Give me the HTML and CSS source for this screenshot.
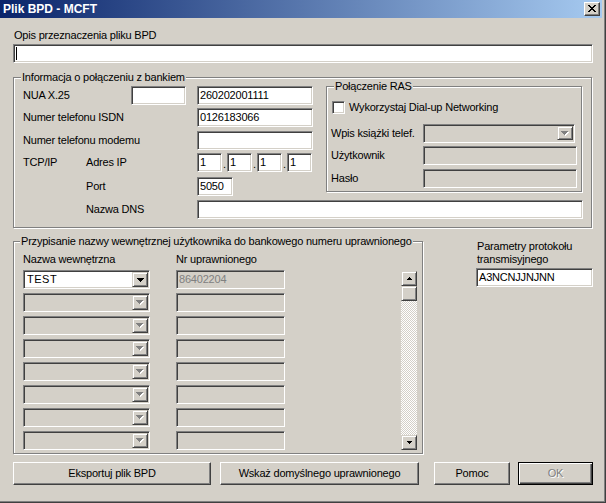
FILE: index.html
```html
<!DOCTYPE html>
<html lang="pl">
<head>
<meta charset="utf-8">
<title>Plik BPD - MCFT</title>
<link rel="stylesheet" href="styles.css">
</head>
<body>
<div class="window">
  <div class="titlebar">
    <span class="title">Plik BPD - MCFT</span>
    <div class="close">
      <svg width="8" height="7" viewBox="0 0 8 7"><path d="M0 0h2v1H0zM6 0h2v1H6zM1 1h2v1H1zM5 1h2v1H5zM2 2h4v1H2zM3 3h2v1H3zM2 4h4v1H2zM1 5h2v1H1zM5 5h2v1H5zM0 6h2v1H0zM6 6h2v1H6z" fill="#000"/></svg>
    </div>
  </div>
  <div class="client">
    <div class="desc-label">Opis przeznaczenia pliku BPD</div>
    <div class="edit desc-edit"><span class="caret"></span></div>

    <div class="group g-conn">
      <div class="gtitle">Informacja o połączeniu z bankiem</div>
      <div class="conn-top">
        <div class="conn-left">
          <div class="lbl c12">NUA X.25</div>
          <div class="edit c3"></div>
          <div class="edit c5">260202001111</div>

          <div class="lbl c14">Numer telefonu ISDN</div>
          <div class="edit c5">0126183066</div>

          <div class="lbl c14">Numer telefonu modemu</div>
          <div class="edit c5"></div>

          <div class="lbl c1">TCP/IP</div>
          <div class="lbl c2">Adres IP</div>
          <div class="ip c5">
            <div class="edit ipbox">1</div><span class="dot">.</span>
            <div class="edit ipbox">1</div><span class="dot">.</span>
            <div class="edit ipbox">1</div><span class="dot">.</span>
            <div class="edit ipbox">1</div>
          </div>

          <div class="lbl c2">Port</div>
          <div class="c5"><div class="edit port">5050</div></div>
        </div>

        <div class="group g-ras">
          <div class="gtitle">Połączenie RAS</div>
          <div class="ras-check">
            <span class="check"></span><span class="check-lbl">Wykorzystaj Dial-up Networking</span>
          </div>
          <div class="ras-row r-combo">
            <span class="ras-lbl">Wpis książki telef.</span>
            <div class="combo disabled ras-combo">
              <span class="combo-text"></span>
              <span class="combo-btn"><svg width="8" height="5" viewBox="0 0 8 5"><path d="M1 1h7v1H1zM2 2h5v1H2zM3 3h3v1H3zM4 4h1v1H4z" fill="#fff"/><path d="M0 0h7v1H0zM1 1h5v1H1zM2 2h3v1H2zM3 3h1v1H3z" fill="#808080"/></svg></span>
            </div>
          </div>
          <div class="ras-row r-user">
            <span class="ras-lbl">Użytkownik</span>
            <div class="edit disabled ras-edit"></div>
          </div>
          <div class="ras-row r-pass">
            <span class="ras-lbl">Hasło</span>
            <div class="edit disabled ras-edit"></div>
          </div>
        </div>
      </div>
      <div class="dns-row">
        <span class="dns-lbl">Nazwa DNS</span>
        <div class="edit dns-edit"></div>
      </div>
    </div>

    <div class="lower">
      <div class="group g-assign">
        <div class="gtitle">Przypisanie nazwy wewnętrznej użytkownika do bankowego numeru uprawnionego</div>
        <div class="assign-head">
          <span>Nazwa wewnętrzna</span>
          <span>Nr uprawnionego</span>
        </div>
        <div class="assign-body">
          <div class="assign-rows">
            <div class="combo">
              <span class="combo-text">TEST</span>
              <span class="combo-btn"><svg width="7" height="4" viewBox="0 0 7 4"><path d="M0 0h7v1H0zM1 1h5v1H1zM2 2h3v1H2zM3 3h1v1H3z" fill="#000"/></svg></span>
            </div>
            <div class="edit disabled gray-text">86402204</div>

            <div class="combo disabled"><span class="combo-text"></span><span class="combo-btn"><svg width="8" height="5" viewBox="0 0 8 5"><path d="M1 1h7v1H1zM2 2h5v1H2zM3 3h3v1H3zM4 4h1v1H4z" fill="#fff"/><path d="M0 0h7v1H0zM1 1h5v1H1zM2 2h3v1H2zM3 3h1v1H3z" fill="#808080"/></svg></span></div>
            <div class="edit disabled"></div>

            <div class="combo disabled"><span class="combo-text"></span><span class="combo-btn"><svg width="8" height="5" viewBox="0 0 8 5"><path d="M1 1h7v1H1zM2 2h5v1H2zM3 3h3v1H3zM4 4h1v1H4z" fill="#fff"/><path d="M0 0h7v1H0zM1 1h5v1H1zM2 2h3v1H2zM3 3h1v1H3z" fill="#808080"/></svg></span></div>
            <div class="edit disabled"></div>

            <div class="combo disabled"><span class="combo-text"></span><span class="combo-btn"><svg width="8" height="5" viewBox="0 0 8 5"><path d="M1 1h7v1H1zM2 2h5v1H2zM3 3h3v1H3zM4 4h1v1H4z" fill="#fff"/><path d="M0 0h7v1H0zM1 1h5v1H1zM2 2h3v1H2zM3 3h1v1H3z" fill="#808080"/></svg></span></div>
            <div class="edit disabled"></div>

            <div class="combo disabled"><span class="combo-text"></span><span class="combo-btn"><svg width="8" height="5" viewBox="0 0 8 5"><path d="M1 1h7v1H1zM2 2h5v1H2zM3 3h3v1H3zM4 4h1v1H4z" fill="#fff"/><path d="M0 0h7v1H0zM1 1h5v1H1zM2 2h3v1H2zM3 3h1v1H3z" fill="#808080"/></svg></span></div>
            <div class="edit disabled"></div>

            <div class="combo disabled"><span class="combo-text"></span><span class="combo-btn"><svg width="8" height="5" viewBox="0 0 8 5"><path d="M1 1h7v1H1zM2 2h5v1H2zM3 3h3v1H3zM4 4h1v1H4z" fill="#fff"/><path d="M0 0h7v1H0zM1 1h5v1H1zM2 2h3v1H2zM3 3h1v1H3z" fill="#808080"/></svg></span></div>
            <div class="edit disabled"></div>

            <div class="combo disabled"><span class="combo-text"></span><span class="combo-btn"><svg width="8" height="5" viewBox="0 0 8 5"><path d="M1 1h7v1H1zM2 2h5v1H2zM3 3h3v1H3zM4 4h1v1H4z" fill="#fff"/><path d="M0 0h7v1H0zM1 1h5v1H1zM2 2h3v1H2zM3 3h1v1H3z" fill="#808080"/></svg></span></div>
            <div class="edit disabled"></div>

            <div class="combo disabled"><span class="combo-text"></span><span class="combo-btn"><svg width="8" height="5" viewBox="0 0 8 5"><path d="M1 1h7v1H1zM2 2h5v1H2zM3 3h3v1H3zM4 4h1v1H4z" fill="#fff"/><path d="M0 0h7v1H0zM1 1h5v1H1zM2 2h3v1H2zM3 3h1v1H3z" fill="#808080"/></svg></span></div>
            <div class="edit disabled"></div>
          </div>
          <div class="scroll">
            <div class="sb-btn"><svg width="5" height="3" viewBox="0 0 5 3"><path d="M2 0h1v1H2zM1 1h3v1H1zM0 2h5v1H0z" fill="#000"/></svg></div>
            <div class="sb-thumb"></div>
            <div class="sb-track"></div>
            <div class="sb-btn"><svg width="5" height="3" viewBox="0 0 5 3"><path d="M0 0h5v1H0zM1 1h3v1H1zM2 2h1v1H2z" fill="#000"/></svg></div>
          </div>
        </div>
      </div>

      <div class="params">
        <div class="params-lbl">Parametry protokołu<br>transmisyjnego</div>
        <div class="edit params-edit">A3NCNJJNJNN</div>
      </div>
    </div>

    <div class="buttons">
      <div class="btn b-export">Eksportuj plik BPD</div>
      <div class="btn b-default-user">Wskaż domyślnego uprawnionego</div>
      <div class="btn b-help">Pomoc</div>
      <div class="btn btn-default b-ok"><span class="dis-text">OK</span></div>
    </div>
  </div>
</div>
</body>
</html>
```
FILE: styles.css
```css
* { box-sizing: border-box; }
html, body { margin: 0; padding: 0; background: #D4D0C8; }
body {
  font-family: "Liberation Sans", Arial, sans-serif;
  font-size: 11px;
  line-height: 13px;
  letter-spacing: -0.2px;
  color: #000;
}

.window {
  width: 606px;
  height: 503px;
  background: #D4D0C8;
  border-right: 1px solid #404040;
  border-bottom: 1px solid #404040;
  box-shadow: inset -1px -1px 0 #808080;
  overflow: hidden;
}

.titlebar {
  width: 602px;
  height: 18px;
  background: linear-gradient(to right, #0A246A, #A6CAF0);
  display: flex;
  align-items: center;
  justify-content: space-between;
  padding: 0 2px 0 3px;
}
.title { color: #fff; font-weight: bold; font-size: 12px; letter-spacing: 0; }
.close {
  width: 16px;
  height: 14px;
  background: #D4D0C8;
  border: 1px solid;
  border-color: #fff #404040 #404040 #fff;
  box-shadow: inset -1px -1px 0 #808080;
  display: flex;
  align-items: center;
  justify-content: center;
  padding: 0 1px 1px 0;
}
.close svg { display: block; }

.client { padding-left: 13px; }

.desc-label { margin-top: 11px; padding-left: 1px; }

/* sunken edit */
.edit {
  height: 19px;
  background: #fff;
  border: 1px solid;
  border-color: #808080 #fff #fff #808080;
  box-shadow: inset 1px 1px 0 #404040, inset -1px -1px 0 #D4D0C8;
  padding: 0 2px;
  display: flex;
  align-items: center;
  white-space: nowrap;
  overflow: hidden;
}
.edit.disabled { background: #D4D0C8; }
.gray-text { color: #808080; }

.desc-edit { margin-top: 2px; width: 580px; }
.caret { width: 1px; height: 13px; background: #000; }

/* etched group box */
.group {
  border: 1px solid #808080;
  box-shadow: inset 1px 1px 0 #fff, 1px 1px 0 #fff;
}
.gtitle {
  margin: -7px 0 0 7px;
  padding: 0 1px;
  background: #D4D0C8;
  width: max-content;
  line-height: 13px;
}

.g-conn { width: 579px; margin-top: 14px; padding-bottom: 8px; }
.conn-top { display: flex; margin-top: 2px; align-items: flex-start; }
.conn-left {
  width: 312px;
  padding-left: 9px;
  display: grid;
  grid-template-columns: 63px 45px 55px 11px 116px;
  grid-template-rows: 22px 23px 22px 24px 19px;
  align-items: start;
}
.lbl { height: 19px; display: flex; align-items: center; white-space: nowrap; }
.c1 { grid-column: 1; }
.c2 { grid-column: 2; }
.c12 { grid-column: 1 / 3; }
.c14 { grid-column: 1 / 5; }
.c3 { grid-column: 3; }
.c5 { grid-column: 5; }

.ip { display: flex; height: 19px; }
.ipbox { width: 25px; }
.dot { width: 5px; display: flex; align-items: flex-end; justify-content: center; padding-bottom: 2px; line-height: 11px; }
.port { width: 36px; }

.g-ras { width: 256px; padding: 0 0 3px 0; }
.ras-check { display: flex; align-items: center; margin: 8px 0 0 5px; height: 13px; }
.check {
  width: 13px;
  height: 13px;
  background: #fff;
  border: 1px solid;
  border-color: #808080 #fff #fff #808080;
  box-shadow: inset 1px 1px 0 #404040, inset -1px -1px 0 #D4D0C8;
}
.check-lbl { margin-left: 4px; white-space: nowrap; }
.ras-row { display: flex; align-items: center; padding-left: 4px; }
.ras-lbl { width: 92px; white-space: nowrap; }
.r-combo { margin-top: 10px; }
.r-user { margin-top: 3px; }
.r-pass { margin-top: 4px; }
.ras-combo { width: 152px; height: 18px; }
.ras-combo .combo-btn { height: 14px; }
.ras-edit { width: 154px; }

.dns-row { display: flex; align-items: center; margin-top: 4px; padding-left: 72px; }
.dns-lbl { width: 111px; }
.dns-edit { width: 386px; }

/* combo box */
.combo {
  height: 19px;
  background: #fff;
  border: 1px solid;
  border-color: #808080 #fff #fff #808080;
  box-shadow: inset 1px 1px 0 #404040, inset -1px -1px 0 #D4D0C8;
  padding: 1px;
  display: flex;
  align-items: stretch;
}
.combo.disabled { background: #D4D0C8; }
.combo-text { flex: 1; padding-left: 2px; display: flex; align-items: center; letter-spacing: 0.5px; }
.combo-btn {
  width: 16px;
  height: 15px;
  background: #D4D0C8;
  border: 1px solid;
  border-color: #D4D0C8 #404040 #404040 #D4D0C8;
  box-shadow: inset 1px 1px 0 #fff, inset -1px -1px 0 #808080;
  display: flex;
  align-items: center;
  justify-content: center;
}
.combo-btn svg { display: block; }

/* lower area */
.lower { display: flex; align-items: flex-start; margin-top: 13px; }
.g-assign { width: 410px; padding-bottom: 3px; }
.g-assign .gtitle { margin-left: 6px; }
.assign-head {
  display: grid;
  grid-template-columns: 153px auto;
  margin-top: 5px;
  padding-left: 9px;
  white-space: nowrap;
}
.assign-body { display: flex; align-items: flex-start; margin-top: 4px; padding-left: 9px; }
.assign-rows {
  display: grid;
  grid-template-columns: 127px 109px;
  column-gap: 26px;
  row-gap: 4px;
}
.scroll {
  width: 16px;
  height: 179px;
  margin: 1px 0 0 116px;
  display: flex;
  flex-direction: column;
  background: repeating-conic-gradient(#fff 0 25%, #D4D0C8 0 50%) 0 0 / 2px 2px;
}
.sb-btn, .sb-thumb {
  height: 15px;
  background: #D4D0C8;
  border: 1px solid;
  border-color: #D4D0C8 #404040 #404040 #D4D0C8;
  box-shadow: inset 1px 1px 0 #fff, inset -1px -1px 0 #808080;
  display: flex;
  align-items: center;
  justify-content: center;
}
.sb-btn svg { display: block; }
.sb-track { flex: 1; }

.params { margin: -1px 0 0 53px; }
.params-lbl { padding-left: 1px; }
.params-edit { margin-top: 2px; width: 117px; }

/* buttons */
.buttons { display: flex; margin-top: 8px; }
.btn {
  height: 23px;
  background: #D4D0C8;
  border: 1px solid;
  border-color: #fff #404040 #404040 #fff;
  box-shadow: inset -1px -1px 0 #808080;
  display: flex;
  align-items: center;
  justify-content: center;
  white-space: nowrap;
}
.btn-default {
  border: 1px solid #000;
  box-shadow: inset 1px 1px 0 #fff, inset -1px -1px 0 #404040, inset -2px -2px 0 #808080;
}
.dis-text { color: #808080; text-shadow: 1px 1px 0 #fff; }
.b-export { width: 198px; }
.b-default-user { width: 199px; margin-left: 9px; }
.b-help { width: 76px; margin-left: 15px; }
.b-ok { width: 75px; margin-left: 8px; }
```
